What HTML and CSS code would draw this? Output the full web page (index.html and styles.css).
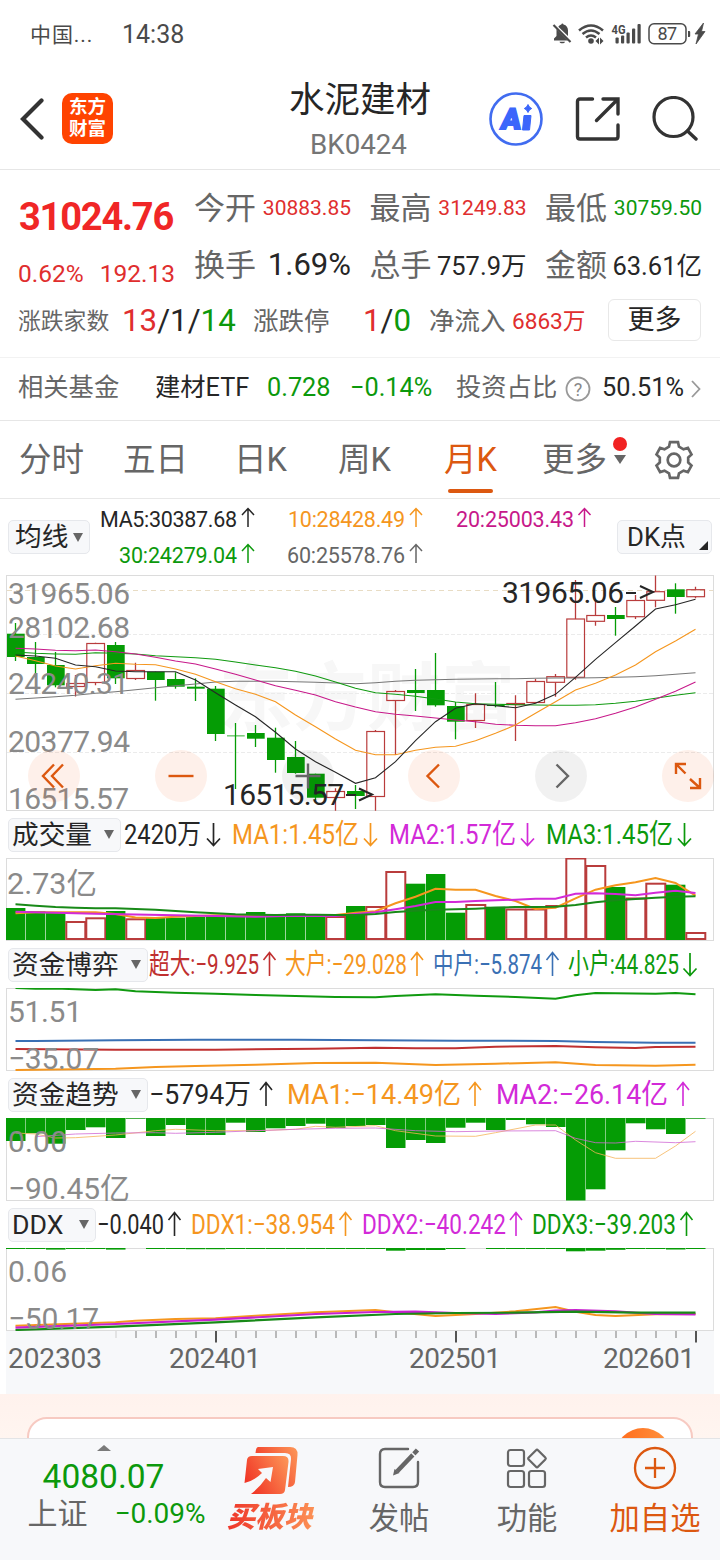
FILE: index.html
```html
<!DOCTYPE html>
<html lang="zh-CN">
<head>
    <meta charset="UTF-8">
    <meta name="viewport" content="width=device-width, initial-scale=1.0">
    <title>水泥建材 BK0424</title>
    <link rel="stylesheet" href="styles.css">
</head>
<body>

    <!-- Shared shapes -->
    <svg class="defs" width="0" height="0">
        <defs>
            <path id="up" d="M0 9V-9M-6 -3L0 -9.5L6 -3" fill="none" stroke="currentColor" stroke-width="1.5"/>
            <path id="down" d="M0 -11V11M-6.5 4.5L0 11.5L6.5 4.5" fill="none" stroke="currentColor" stroke-width="1.7"/>
            <path id="up-lg" d="M0 12V-11M-6 -4L0 -11.5L6 -4" fill="none" stroke="currentColor" stroke-width="1.6"/>
            <linearGradient id="hot" x1="0" y1="0.7" x2="1" y2="0.2">
                <stop offset="0" stop-color="#f03224"/>
                <stop offset="1" stop-color="#fc9155"/>
            </linearGradient>
        </defs>
    </svg>

    <!-- Status Bar -->
    <div class="status-bar">
        <span class="carrier">中国...</span>
        <span class="clock">14:38</span>
        <svg class="status-icons" width="158" height="28" viewBox="0 0 158 28">
            <g fill="#4a4a4a">
                <path d="M4 20.500V18.500l2.500-2.500V9L18 20.500zM8.300 6.800C9.200 5.600 10.200 4.800 11.300 4.500c.2-1.200 2-1.200 2.200 0 3 .7 4.500 3 4.500 6v5.500z"/>
                <path d="M9.500 21.700h5.500c-.5 2.200-5 2.200-5.500 0z"/>
                <path d="M3.500 5l17 17" stroke="#4a4a4a" stroke-width="2.200"/>
                <circle cx="41" cy="21" r="2.800"/>
                <path d="M49 17.500v7l-3.500-3.500zM50 17.500v7l3.500-3.500z"/>
                <rect x="65.500" y="17.500" width="3.200" height="6" rx="1"/>
                <rect x="71" y="15.500" width="3.200" height="8" rx="1"/>
                <rect x="76.500" y="12.500" width="3.200" height="11" rx="1"/>
                <rect x="82" y="8.500" width="3.200" height="15" rx="1"/>
                <rect x="87.500" y="4" width="3.200" height="19.500" rx="1"/>
                <path d="M138 11h1.200q1 0 1 1v4q0 1-1 1H138z"/>
                <path d="M153.500 3l-8.500 11h3.500l-2.500 10 9-12.500h-3.500z" stroke="#4a4a4a" stroke-width=".8"/>
            </g>
            <g fill="none" stroke="#4a4a4a" stroke-width="2.500">
                <path d="M29 10.500q12-10 24 0M32.500 14q8.500-7 17 0M36 17.500q5-4 10 0"/>
                <rect x="99" y="3.700" width="37" height="20" rx="5" stroke-width="1.500"/>
            </g>
            <text class="net" x="61.500" y="14" textLength="14" lengthAdjust="spacingAndGlyphs">4G</text>
            <text class="battery" x="107.500" y="20.300" textLength="19.500">87</text>
        </svg>
    </div>

    <!-- Title Bar -->
    <div class="title-bar">
        <div class="title-left">
            <svg width="26" height="44" viewBox="0 0 26 44"><path d="M23.500 3.500L5 22l18.500 18.500" fill="none" stroke="#333" stroke-width="4.200" stroke-linecap="round"/></svg>
            <div class="logo"><span>东方</span><span>财富</span></div>
        </div>
        <div class="title-center">
            <h1>水泥建材</h1>
            <p>BK0424</p>
        </div>
        <div class="title-right">
            <svg width="54" height="54" viewBox="0 0 54 54">
                <circle cx="27" cy="27" r="25.500" fill="none" stroke="#416cf0" stroke-width="2.600"/>
                <text class="ai" transform="translate(11 36.500) skewX(-7)" textLength="20" lengthAdjust="spacingAndGlyphs">A</text>
                <path d="M35 23.500h7l-1.500 14.500h-7z" fill="#3b66fb" stroke="#3b66fb" stroke-linejoin="round"/>
                <path d="M39 12.500q1 3 3.700 4-2.700 1-3.700 4-1-3-3.700-4 2.700-1 3.700-4z" fill="#3b66fb" stroke="#3b66fb"/>
            </svg>
            <svg width="46" height="46" viewBox="0 0 46 46">
                <path d="M17.500 3H5Q2.500 3 2.500 5.500v35Q2.500 43 5 43h35.500Q43 43 43 40.500V29M28 3h15v15M42 4L21.500 24.500" fill="none" stroke="#333" stroke-width="3.400" stroke-linecap="round"/>
            </svg>
            <svg width="46" height="46" viewBox="0 0 46 46">
                <circle cx="21.500" cy="21" r="19.500" fill="none" stroke="#333" stroke-width="3.200"/>
                <path d="M35.500 35l8.500 8" stroke="#333" stroke-width="3.400" stroke-linecap="round"/>
            </svg>
        </div>
    </div>

    <!-- Quote -->
    <div class="quote">
        <div class="price">
            <div class="last red">31024.76</div>
            <div class="change red"><span>0.62%</span><span>192.13</span></div>
        </div>
        <div class="stats">
            <div class="stat"><label>今开</label><b class="small red">30883.85</b></div>
            <div class="stat"><label>最高</label><b class="small red">31249.83</b></div>
            <div class="stat"><label>最低</label><b class="small green">30759.50</b></div>
            <div class="stat"><label>换手</label><b class="large">1.69%</b></div>
            <div class="stat"><label>总手</label><b>757.9万</b></div>
            <div class="stat"><label>金额</label><b>63.61亿</b></div>
        </div>
        <div class="breadth">
            <span class="label-sm">涨跌家数</span>
            <span class="count"><i class="red">13</i>/1/<i class="green">14</i></span>
            <span class="label-md">涨跌停</span>
            <span class="count"><i class="red">1</i>/<i class="green">0</i></span>
            <span class="label-md">净流入</span>
            <span class="flow red">6863万</span>
            <button class="more-button">更多</button>
        </div>
    </div>

    <!-- Related Fund -->
    <div class="fund">
        <span class="gray">相关基金</span>
        <span>建材ETF</span>
        <span class="green">0.728</span>
        <span class="green">−0.14%</span>
        <span class="gray">投资占比</span>
        <svg width="26" height="26" viewBox="0 0 26 26">
            <circle cx="13" cy="13" r="11.500" fill="none" stroke="#999" stroke-width="1.800"/>
            <text class="help" x="13" y="19.500">?</text>
        </svg>
        <span>50.51%</span>
        <svg width="12" height="20" viewBox="0 0 12 20"><path d="M2 2l7.500 8L2 18" fill="none" stroke="#999" stroke-width="1.800"/></svg>
    </div>

    <!-- Period Tabs -->
    <div class="tabs">
        <span>分时</span>
        <span>五日</span>
        <span>日K</span>
        <span>周K</span>
        <span class="active">月K</span>
        <span class="more-tab">更多</span>
        <svg width="40" height="40" viewBox="-20 -20 40 40" fill="none" stroke="#666" stroke-width="2.700">
            <path d="M-4 -17.800h8l1 4.500 4.500 2.600 4.400-1.400 3.600 6.500-3.300 3.200v4.800l3.300 3.200-3.600 6.500-4.400-1.400-4.500 2.600-1 4.500h-8l-1-4.500-4.500-2.600-4.400 1.400-3.600-6.500 3.300-3.200v-4.800l-3.300-3.200 3.600-6.500 4.400 1.400 4.500-2.600z"/>
            <circle r="6.300"/>
        </svg>
    </div>

    <!-- Moving Averages -->
    <div class="ma-row">
        <button class="picker">均线<i class="caret"></i></button>
        <svg class="ma-values" width="527" height="76" viewBox="90 0 527 76">
            <g class="c-black"><text x="100" y="27.500" textLength="137">MA5:30387.68</text><use href="#up" x="248" y="19"/></g>
            <g class="c-orange"><text x="288" y="27.500" textLength="117">10:28428.49</text><use href="#up" x="416" y="19"/></g>
            <g class="c-pink"><text x="456" y="27.500" textLength="118">20:25003.43</text><use href="#up" x="584.500" y="19"/></g>
            <g class="c-green"><text x="119" y="63.500" textLength="118">30:24279.04</text><use href="#up" x="248" y="55"/></g>
            <g class="c-gray"><text x="287" y="63.500" textLength="118">60:25578.76</text><use href="#up" x="416" y="55"/></g>
        </svg>
        <button class="picker dk">DK点<i class="corner"></i></button>
    </div>

    <!-- Candlestick Chart -->
    <div class="chart-wrap">
        <svg id="kline" width="720" height="236" viewBox="0 0 720 236">
            <text class="watermark" x="219" y="149" textLength="296">东方财富</text>
            <g class="grid-lines">
                <path d="M7 59.500H713M7 118.500H713M7 177.500H713"/>
                <path class="last-line" d="M7 15.500H713"/>
            </g>
            <rect class="frame" x="6.500" y="0.500" width="707" height="235"/>
            <g class="plot"></g>
            <g class="axis-text">
                <text x="8" y="28.500" textLength="122">31965.06</text>
                <text x="8" y="63" textLength="122">28102.68</text>
                <text x="8" y="118.500" textLength="121">24240.31</text>
                <text x="8" y="177" textLength="122">20377.94</text>
                <text x="8" y="234" textLength="121">16515.57</text>
            </g>
            <g class="extreme">
                <text x="502" y="27.500" textLength="122">31965.06</text>
                <text x="223" y="229.500" textLength="121">16515.57</text>
                <path d="M626 18h10M640 11l13 6-13 6"/>
                <path d="M346 220h10M359 213.500l13 6-13 6"/>
            </g>
        </svg>
        <div class="chart-tools">
            <button><svg viewBox="-26 -26 52 52"><path d="M0 -11.500L-11 0 0 11.500M9 -11.500L-2 0 9 11.500"/></svg></button>
            <button><svg viewBox="-26 -26 52 52"><path d="M-12.500 0H12.500"/></svg></button>
            <button class="off"><svg viewBox="-26 -26 52 52"><path d="M-12.500 0H12.500M0 -12.500V12.500"/></svg></button>
            <button><svg viewBox="-26 -26 52 52"><path d="M5 -11.500L-6.500 0 5 11.500"/></svg></button>
            <button class="off"><svg viewBox="-26 -26 52 52"><path d="M-4.500 -11.500L7 0 -4.500 11.500"/></svg></button>
            <button><svg viewBox="-26 -26 52 52"><path d="M-12 -2V-12H-2M-12 -12L-2.500 -2.500M2 3L12 12M12 2V12H2"/></svg></button>
        </div>
    </div>

    <!-- Volume -->
    <div class="legend">
        <button class="picker three">成交量<i class="caret"></i></button>
        <svg width="599" height="47" viewBox="121 0 599 47">
            <g class="c-black"><text x="124" y="33" textLength="77" lengthAdjust="spacingAndGlyphs">2420万</text><use href="#down" x="213.500" y="23"/></g>
            <g class="c-orange"><text x="232" y="33" textLength="127" lengthAdjust="spacingAndGlyphs">MA1:1.45亿</text><use href="#down" x="370.500" y="23"/></g>
            <g class="c-purple"><text x="389" y="33" textLength="127" lengthAdjust="spacingAndGlyphs">MA2:1.57亿</text><use href="#down" x="527.500" y="23"/></g>
            <g class="c-green"><text x="546" y="33" textLength="127" lengthAdjust="spacingAndGlyphs">MA3:1.45亿</text><use href="#down" x="684.500" y="23"/></g>
        </svg>
    </div>
    <svg id="volume" width="720" height="83" viewBox="0 0 720 83">
        <rect class="frame" x="6.500" y="0.500" width="707" height="82"/>
        <g class="plot"></g>
        <g class="axis-text">
            <text x="7" y="36" textLength="90" lengthAdjust="spacingAndGlyphs">2.73亿</text>
        </g>
    </svg>

    <!-- Capital Game -->
    <div class="legend">
        <button class="picker">资金博弈<i class="caret"></i></button>
        <svg width="572" height="47" viewBox="148 0 572 47">
            <g class="c-red"><text x="149" y="33" textLength="110" lengthAdjust="spacingAndGlyphs">超大:−9.925</text><use href="#up-lg" x="269.500" y="23"/></g>
            <g class="c-orange"><text x="285" y="33" textLength="122" lengthAdjust="spacingAndGlyphs">大户:−29.028</text><use href="#up-lg" x="417" y="23"/></g>
            <g class="c-blue"><text x="433" y="33" textLength="109" lengthAdjust="spacingAndGlyphs">中户:−5.874</text><use href="#up-lg" x="552.500" y="23"/></g>
            <g class="c-green"><text x="568" y="33" textLength="111" lengthAdjust="spacingAndGlyphs">小户:44.825</text><use href="#down" x="690" y="23"/></g>
        </svg>
    </div>
    <svg id="game" width="720" height="83" viewBox="0 0 720 83">
        <rect class="frame" x="6.500" y="0.500" width="707" height="82"/>
        <g class="plot"></g>
        <g class="axis-text">
            <text x="8" y="34" textLength="74">51.51</text>
            <text x="8" y="81" textLength="91">−35.07</text>
        </g>
    </svg>

    <!-- Capital Trend -->
    <div class="legend">
        <button class="picker">资金趋势<i class="caret"></i></button>
        <svg width="572" height="47" viewBox="148 0 572 47">
            <g class="c-black"><text x="149" y="33" textLength="102" lengthAdjust="spacingAndGlyphs">−5794万</text><use href="#up-lg" x="266" y="23"/></g>
            <g class="c-orange"><text x="287" y="33" textLength="174" lengthAdjust="spacingAndGlyphs">MA1:−14.49亿</text><use href="#up-lg" x="475" y="23"/></g>
            <g class="c-purple"><text x="496" y="33" textLength="172" lengthAdjust="spacingAndGlyphs">MA2:−26.14亿</text><use href="#up-lg" x="683" y="23"/></g>
        </svg>
    </div>
    <svg id="trend" width="720" height="83" viewBox="0 0 720 83">
        <rect class="frame" x="6.500" y="0.500" width="707" height="82"/>
        <g class="plot"></g>
        <g class="axis-text">
            <text x="8" y="34" textLength="59">0.00</text>
            <text x="8" y="80.500" textLength="122" lengthAdjust="spacingAndGlyphs">−90.45亿</text>
        </g>
    </svg>

    <!-- DDX -->
    <div class="legend">
        <button class="picker ddx-picker">DDX<i class="caret"></i></button>
        <svg width="624" height="47" viewBox="96 0 624 47">
            <g class="c-black"><text x="97" y="33" textLength="67" lengthAdjust="spacingAndGlyphs">−0.040</text><use href="#up-lg" x="174.500" y="23"/></g>
            <g class="c-orange"><text x="191" y="33" textLength="144" lengthAdjust="spacingAndGlyphs">DDX1:−38.954</text><use href="#up-lg" x="345.500" y="23"/></g>
            <g class="c-purple"><text x="362" y="33" textLength="144" lengthAdjust="spacingAndGlyphs">DDX2:−40.242</text><use href="#up-lg" x="516" y="23"/></g>
            <g class="c-green"><text x="532" y="33" textLength="144" lengthAdjust="spacingAndGlyphs">DDX3:−39.203</text><use href="#up-lg" x="686.500" y="23"/></g>
        </svg>
    </div>
    <svg id="ddx" width="720" height="83" viewBox="0 0 720 83">
        <rect class="frame" x="6.500" y="0.500" width="707" height="82"/>
        <g class="plot"></g>
        <g class="axis-text">
            <text x="8" y="34" textLength="59">0.06</text>
            <text x="8" y="81" textLength="91">−50.17</text>
        </g>
    </svg>

    <!-- Time Axis -->
    <div class="time-axis">
        <svg id="ticks" width="708" height="63" viewBox="6 0 708 63">
            <g class="plot"></g>
            <text x="8" y="36.500" textLength="94">202303</text>
            <text x="169" y="36.500" textLength="92">202401</text>
            <text x="409" y="36.500" textLength="92">202501</text>
            <text x="603" y="36.500" textLength="92">202601</text>
        </svg>
    </div>

    <!-- Card Peeking Above the Bar -->
    <div class="peek">
        <div class="peek-card"><div class="peek-ball"></div></div>
    </div>

    <!-- Bottom Bar -->
    <div class="bottom-bar">
        <div class="index">
            <i class="up-caret"></i>
            <div class="index-value">4080.07</div>
            <div class="index-line"><span>上证</span><span class="green">−0.09%</span></div>
        </div>
        <div class="action hot">
            <svg width="54" height="50" viewBox="0 0 54 50">
                <path d="M14 1h32q8 0 7.500 8L51 36q-.5 5-7 5l3-28q.5-6-6-6H11.500Q12 1 14 1z" fill="url(#hot)"/>
                <path d="M8 10h31q6 0 5.500 6L41 44q-.5 4-5 4H7q9-7 15-16l4.500 4L29 21l-15 2 4 4Q10 35 0.500 37L3 14q.5-4 5-4z" fill="url(#hot)"/>
            </svg>
            <span>买板块</span>
        </div>
        <div class="action">
            <svg width="44" height="44" viewBox="0 0 44 44" fill="none" stroke="#666" stroke-width="2.400">
                <path d="M31 3H8Q3 3 3 8v28q0 5 5 5h28q5 0 5-5V16" stroke-linecap="round"/>
                <path d="M40.500 4L20 25.500" stroke-width="4.600"/><path d="M16 29.500l1.500-6.500 5 4z" fill="#666" stroke="none"/><path d="M34 6l5 5" stroke="#f7f8fa" stroke-width="1.500"/>
            </svg>
            <span>发帖</span>
        </div>
        <div class="action">
            <svg width="44" height="44" viewBox="0 0 44 44" fill="none" stroke="#666" stroke-width="2.200">
                <rect x="3" y="4" width="16" height="16" rx="2.500"/>
                <rect x="3" y="25" width="16" height="16" rx="2.500"/>
                <rect x="24" y="25" width="16" height="16" rx="2.500"/>
                <path d="M31 4.200Q32 3 33 4.200L40.300 11.500Q41.300 12.500 40.300 13.500L33 20.800Q32 22 31 20.800L23.700 13.500Q22.700 12.500 23.700 11.500z"/>
            </svg>
            <span>功能</span>
        </div>
        <div class="action add">
            <svg width="44" height="44" viewBox="0 0 44 44" fill="none" stroke="#dc5810" stroke-width="2.300">
                <circle cx="22" cy="22" r="20"/>
                <path d="M12 22h20M22 12v20"/>
            </svg>
            <span>加自选</span>
        </div>
    </div>

    <script src="charts.js"></script>
</body>
</html>
```
FILE: styles.css
```css
* {
    margin: 0;
    padding: 0;
    box-sizing: border-box;
}

body {
    width: 720px;
    height: 1560px;
    overflow: hidden;
    font-family: Roboto, "Noto Sans CJK SC", sans-serif;
    background-color: #fff;
    color: #262626;
    white-space: nowrap;
}

svg {
    display: block;
    flex-shrink: 0;
}

button {
    font-family: inherit;
    color: inherit;
    border: none;
    background: none;
}

i, b, h1 {
    font-style: normal;
    font-weight: normal;
}

.defs {
    position: absolute;
}

.red { color: #e02e2e; }
.green { color: #0c990c; }
.gray { color: #666; }

/* Status Bar */
.status-bar {
    height: 68px;
    display: flex;
    align-items: center;
    padding: 0 12px 0 30px;
    color: #4a4a4a;
}

.carrier {
    width: 92px;
    font-size: 21px;
    letter-spacing: 0.900px;
    padding-bottom: 2px;
}

.clock {
    font-size: 25px;
}

.status-icons {
    margin-left: auto;
}

.net {
    font-size: 13px;
    font-weight: bold;
    fill: #4a4a4a;
}

.battery {
    font-size: 18px;
    fill: #4a4a4a;
}

/* Title Bar */
.title-bar {
    height: 102px;
    display: grid;
    grid-template-columns: 220px 280px 220px;
    border-bottom: 1px solid #e6e6e6;
}

.title-left {
    display: flex;
    align-items: center;
    gap: 18px;
    padding-left: 18px;
}

.logo {
    width: 51px;
    height: 51px;
    border-radius: 10px;
    background-color: #ff4300;
    color: #fff;
    display: flex;
    flex-direction: column;
    align-items: center;
    justify-content: center;
    font-size: 18.500px;
    font-weight: bold;
    line-height: 22px;
    padding-bottom: 1px;
}

.title-center {
    text-align: center;
    padding-top: 9px;
}

.title-center h1 {
    font-size: 35.500px;
    line-height: 46px;
}

.title-center p {
    font-size: 27.700px;
    line-height: 43px;
    margin-left: -3px;
    color: #757575;
}

.title-right {
    display: flex;
    align-items: center;
    justify-content: flex-end;
    gap: 31px;
    padding-right: 22px;
    margin-left: -60px;
}

.title-right svg:first-child {
    margin-right: 1px;
}

.ai {
    font-size: 29px;
    font-weight: 900;
    fill: #3b66fb;
    stroke: #3b66fb;
    stroke-width: 1.800px;
}

/* Quote */
.quote {
    height: 188px;
    display: grid;
    grid-template-columns: 175px 508px;
    grid-template-rows: 119px 60px;
    padding: 9px 18px 0 19px;
    border-bottom: 1px solid #f2f2f2;
}

.last {
    height: 76px;
    line-height: 76px;
    font-size: 38px;
    font-weight: bold;
    letter-spacing: -1.200px;
    color: #f02626;
}

.change {
    display: flex;
    gap: 16px;
    margin-left: -1px;
    font-size: 24.500px;
    line-height: 38px;
}

.stats {
    display: grid;
    grid-template-columns: repeat(3, 157px);
    grid-auto-rows: 57px;
    column-gap: 18.500px;
}

.stat {
    display: flex;
    align-items: center;
    justify-content: space-between;
    font-size: 25.500px;
}

.stat label {
    font-size: 31px;
    padding-bottom: 5px;
    color: #666;
}

.stat b {
    padding-bottom: 2px;
}

.stat .small {
    font-size: 21px;
    padding-bottom: 0;
}

.stat .large {
    font-size: 31px;
    padding-bottom: 0;
}

.breadth {
    grid-column: 1 / 3;
    height: 44px;
    display: grid;
    grid-template-columns: 104px 131px 110px 66px 83px 96px 93px;
    align-items: center;
    margin-left: -1px;
}

.label-sm {
    font-size: 22.800px;
    color: #666;
    padding-bottom: 2px;
}

.label-md {
    font-size: 25.500px;
    color: #666;
    padding-bottom: 3px;
}

.count {
    font-size: 31.300px;
}

.flow {
    font-size: 22.600px;
    padding-bottom: 2px;
}

.more-button {
    height: 42px;
    border: 1px solid #e8e8e8;
    border-radius: 6px;
    font-size: 27px;
    line-height: 36px;
}

/* Related Fund */
.fund {
    height: 63px;
    display: grid;
    grid-template-columns: 137px 112px 83px 106px 109px 37px 88px 12px;
    align-items: center;
    padding: 0 0 1px 18px;
    font-size: 25.300px;
    border-bottom: 1px solid #e6e6e6;
}

.fund span {
    line-height: 30px;
    padding-bottom: 2px;
}

.help {
    font-size: 18px;
    fill: #888;
    text-anchor: middle;
}

/* Period Tabs */
.tabs {
    height: 78px;
    display: grid;
    grid-template-columns: 104px 111px 104px 106px 98px 111px 50px;
    align-items: center;
    padding-left: 19px;
    font-size: 32.500px;
    color: #666;
    border-bottom: 1px solid #e8e8e8;
}

.tabs span {
    position: relative;
    justify-self: start;
    line-height: 78px;
}

.tabs svg {
    margin-left: 1px;
}

.tabs .active {
    color: #dc5810;
}

.tabs .active::after {
    content: "";
    position: absolute;
    left: 4px;
    bottom: 6px;
    width: 45px;
    height: 4px;
    border-radius: 2px;
    background-color: #dc5810;
}

.more-tab::before {
    content: "";
    position: absolute;
    right: -20px;
    top: 16px;
    width: 14px;
    height: 14px;
    border-radius: 50%;
    background-color: #f12222;
}

.more-tab::after {
    content: "";
    position: absolute;
    right: -19px;
    top: 34px;
    border: 6px solid transparent;
    border-top: 9px solid #666;
    border-bottom: none;
}

/* Moving Averages */
.ma-row {
    height: 76px;
    display: flex;
    align-items: center;
    padding-left: 8px;
}

.picker {
    width: 140px;
    height: 34px;
    display: flex;
    align-items: center;
    justify-content: space-between;
    flex-shrink: 0;
    padding: 0 6px 0 3px;
    font-size: 26.700px;
    line-height: 30px;
    background-color: #f7f8fa;
    border: 1px solid #e6e8ec;
    border-radius: 5px;
}

.picker.three {
    width: 113px;
}

.picker.ddx-picker {
    width: 88px;
}

.ma-row .picker {
    width: 82px;
    padding-left: 6px;
}

.ma-row .dk {
    width: 95px;
    padding: 0 3px 0 9px;
    font-size: 25.800px;
}

.caret {
    border: 5.500px solid transparent;
    border-top: 9px solid #666;
    border-bottom: none;
}

.corner {
    align-self: flex-end;
    margin-bottom: 3px;
    border-left: 9px solid transparent;
    border-bottom: 9px solid #262626;
}

.ma-values text {
    font-size: 21.500px;
    fill: currentColor;
}

.c-black { color: #262626; }
.c-orange { color: #f5961e; }
.c-pink { color: #c7198a; }
.c-green { color: #0c990c; }
.c-gray { color: #666; }
.c-purple { color: #d22ad8; }
.c-red { color: #c03030; }
.c-blue { color: #3a70b4; }

/* Charts */
.chart-wrap {
    position: relative;
}

.frame {
    fill: none;
    stroke: #dcdcdc;
}

.grid-lines path {
    stroke: #ebebeb;
    stroke-dasharray: 4 2;
}

.grid-lines .last-line {
    stroke: #e8dcc4;
    stroke-dasharray: 5 4;
}

.watermark {
    font-size: 74px;
    font-weight: bold;
    fill: #f7f7f7;
}

.axis-text text {
    font-size: 30px;
    fill: #8a8a8a;
}

.extreme text {
    font-size: 30px;
    fill: #262626;
}

.extreme path {
    fill: none;
    stroke: #262626;
    stroke-width: 2;
}

.chart-tools {
    position: absolute;
    left: 28px;
    right: 6px;
    top: 175px;
    display: flex;
    justify-content: space-between;
}

.chart-tools button {
    width: 52px;
    height: 52px;
    border-radius: 50%;
    background-color: rgba(240, 90, 20, 0.09);
}

.chart-tools .off {
    background-color: rgba(0, 0, 0, 0.055);
}

.chart-tools path {
    fill: none;
    stroke: #dc5810;
    stroke-width: 2.400;
}

.chart-tools .off path {
    stroke: #666;
}

/* Indicator Legends */
.legend {
    height: 47px;
    display: flex;
    align-items: center;
    padding-left: 8px;
}

.legend text {
    font-size: 28px;
    fill: currentColor;
}

/* Time Axis */
.time-axis {
    height: 63px;
    margin: 0 6px;
    background-color: #f7f8fa;
}

.time-axis text {
    font-size: 28px;
    fill: #666;
}

/* Card */
.peek {
    height: 44px;
    padding: 23px 27px 0;
    overflow: hidden;
    background: linear-gradient(#fff2ed, #fff5f0);
}

.peek-card {
    position: relative;
    height: 60px;
    background-color: #fff;
    border: 2px solid #f7cac2;
    border-radius: 20px;
}

.peek-ball {
    position: absolute;
    right: 20px;
    top: 9px;
    width: 56px;
    height: 56px;
    border-radius: 50%;
    background: linear-gradient(90deg, #ff6a1a, #ff9440);
}

/* Bottom Bar */
.bottom-bar {
    height: 122px;
    display: grid;
    grid-template-columns: 207px repeat(4, 128px);
    background-color: #f7f8fa;
    border-top: 1px solid #e3e4e6;
}

.index {
    display: flex;
    flex-direction: column;
    align-items: center;
    padding-top: 6px;
}

.up-caret {
    border: 7.500px solid transparent;
    border-top: none;
    border-bottom: 6px solid #7a7a7a;
}

.index-value {
    font-size: 33.500px;
    line-height: 50px;
    padding-top: 1px;
    color: #0c990c;
}

.index-line {
    display: flex;
    align-items: center;
    gap: 27px;
    padding-left: 26px;
    font-size: 30px;
    line-height: 24px;
    color: #666;
}

.index-line .green {
    font-size: 28px;
    color: #0c990c;
}

.action {
    display: flex;
    flex-direction: column;
    align-items: center;
    padding-top: 7px;
    font-size: 30.300px;
    color: #666;
}

.action span {
    line-height: 44px;
    margin-top: 7px;
}

.hot span {
    font-size: 28.500px;
    font-weight: 900;
    font-style: italic;
    line-height: 40px;
    margin: 2px 0 0 -3px;
    padding: 0 3px;
    color: transparent;
    background: linear-gradient(90deg, #ee3328, #fc9155);
    background-clip: text;
    -webkit-background-clip: text;
}

.action.add {
    color: #dc5810;
}
```
FILE: charts.js
```js
const NS = 'http://www.w3.org/2000/svg';
const STEP = 20;
const GREEN = '#059c05';
const RED = '#b93c3c';

// Centre of the column for month i
function cx(i) {
    return 15.5 + i * STEP;
}

function add(parent, name, attrs) {
    const el = document.createElementNS(NS, name);
    for (const key in attrs) {
        el.setAttribute(key, attrs[key]);
    }
    parent.appendChild(el);
}

function plot(id) {
    return document.querySelector('#' + id + ' .plot');
}

// One value per month
function line(parent, values, color, width) {
    const points = values.map((y, i) => cx(i) + ',' + y).join(' ');
    add(parent, 'polyline', { points: points, fill: 'none', stroke: color, 'stroke-width': width });
}

// [month, y] pairs, straight between them
function sparseLine(parent, pairs, color, width) {
    const points = pairs.map(p => cx(p[0]) + ',' + p[1]).join(' ');
    add(parent, 'polyline', { points: points, fill: 'none', stroke: color, 'stroke-width': width });
}

// Candles: [direction, body top, body bottom, high, low]
const candles = [
    ['d', 58.7, 82, 48, 86], ['d', 82, 89, 67, 101.7], ['d', 90, 110.3, 77, 112.3],
    ['u', 108.5, 111.5, 100, 121.5], ['u', 68.5, 107.5, 67.7, 110.3], ['d', 70, 103.3, 67, 109],
    ['u', 95.5, 103.5, 87.7, 105], ['d', 96.7, 105, 96.7, 125.7], ['d', 104, 111.7, 97.3, 113.7],
    ['d', 111.7, 113.7, 103.3, 126], ['d', 113.7, 159, 111, 166], ['d', 160.5, 161.3, 148, 214],
    ['d', 158, 163.7, 150, 172], ['d', 162.7, 185, 152.7, 197.7], ['d', 182, 198, 166, 198.7],
    ['d', 198.7, 222.7, 198.7, 225], ['u', 216.5, 222.5, 213.3, 235.7], ['d', 216, 221, 210, 234],
    ['u', 156.5, 221.5, 155, 235.7], ['u', 116.5, 125.5, 115, 180], ['d', 115, 118, 94, 136],
    ['d', 115, 130.3, 78, 131.7], ['d', 131, 146.7, 127, 164.3], ['u', 129.5, 145.5, 118.3, 153],
    ['d', 130, 131, 107, 132.3], ['u', 128.5, 129.5, 120.3, 166], ['u', 106.5, 127.5, 104, 128.3],
    ['u', 101.7, 107.3, 99, 121.7], ['u', 44, 102.3, 5, 104.7], ['u', 40.5, 46.3, 25, 50.7],
    ['d', 40, 44, 32, 60.7], ['u', 25.5, 41.7, 20, 44], ['u', 16.7, 25.3, 0.5, 32.3],
    ['d', 14.3, 22, 8.3, 38.7], ['u', 14.7, 21.7, 11.7, 23.3]
];

const kline = plot('kline');
candles.forEach(([dir, top, bottom, high, low], i) => {
    const x = cx(i);
    if (dir === 'd') {
        add(kline, 'path', { d: `M${x} ${high}V${low}`, stroke: GREEN, 'stroke-width': 1.3 });
        add(kline, 'rect', { x: x - 8.5, y: top, width: 17.7, height: bottom - top, fill: GREEN });
    } else {
        add(kline, 'path', { d: `M${x} ${high}V${top}M${x} ${bottom}V${low}`, stroke: RED, 'stroke-width': 1.3 });
        add(kline, 'rect', { x: x - 8.7, y: top, width: 17.7, height: bottom - top, fill: 'none', stroke: RED, 'stroke-width': 1.2 });
    }
});

line(kline, [124.3, 123, 121.7, 120.3, 118.3, 116.7, 114.7, 112.7, 110.7, 109, 107, 106.3, 106.3, 106.3, 106.7, 107.3, 108, 108.7, 107.7, 106.3, 105.3, 104.7, 104.3, 104, 103.7, 103.7, 103.3, 103, 103, 102.7, 102.3, 101.7, 100.7, 99.3, 97.7], '#777', 1.1);
line(kline, [77, 78.3, 79, 79.3, 77.7, 78.3, 79, 80.7, 81.7, 82.7, 84.3, 87, 90, 92.7, 96.3, 101, 107, 113.3, 117.7, 119.3, 121.3, 124, 127, 128.7, 129.3, 129.7, 130, 130.3, 130.3, 129.7, 128.3, 126.3, 123.3, 120.3, 117.7], '#109a10', 1.1);
line(kline, [73.3, 74, 75.3, 75.7, 75, 76.7, 79, 82.3, 86, 89, 94, 99.3, 105, 110.7, 115.3, 120, 126.7, 132, 136.7, 139.3, 141, 143, 145, 146.7, 149.3, 150.3, 150.7, 150.7, 147.7, 143.7, 138.3, 132, 124.3, 116.3, 107], '#c7198a', 1.1);
line(kline, [81, 85.7, 91, 94, 90.7, 88.3, 89.3, 89.7, 94, 99.3, 106.7, 113.7, 119.3, 126.7, 140, 151.7, 164, 175.3, 179.7, 179.7, 175.3, 172.3, 171.3, 165.7, 158.3, 150, 138.3, 126.7, 115, 108.3, 100, 90, 76.7, 66, 54.3], '#f5961e', 1.1);
line(kline, [80, 81, 83.3, 90, 91.7, 96, 96.7, 96.7, 96.7, 105, 117.7, 130, 141.7, 157.3, 174, 186.7, 197.3, 208.3, 202.7, 186.7, 165.7, 146.7, 133.3, 128.7, 130.7, 132.7, 128.3, 119.3, 102.3, 84.3, 67.7, 51, 34, 29.7, 24.3], '#262626', 1.1);

// Volume: [direction, bar top]
const volumes = [
    ['d', 50], ['d', 53], ['d', 55], ['u', 64], ['u', 60.3], ['d', 53], ['u', 61.3], ['d', 59.7], ['d', 59.7],
    ['d', 59], ['d', 58], ['d', 58], ['d', 54], ['d', 56], ['d', 55.3], ['d', 58], ['u', 59], ['d', 48],
    ['u', 49], ['u', 14], ['d', 25.7], ['d', 16], ['d', 54.7], ['u', 47], ['d', 48.7], ['u', 51.5],
    ['u', 51.5], ['u', 48], ['u', 0.5], ['u', 8], ['d', 29], ['u', 40.5], ['u', 25.7], ['d', 26.7], ['u', 75]
];

const volume = plot('volume');
volumes.forEach(([dir, top], i) => {
    if (dir === 'd') {
        add(volume, 'rect', { x: 6 + i * STEP, y: top, width: 19.4, height: 82 - top, fill: GREEN });
    } else {
        add(volume, 'rect', { x: 6.3 + i * STEP, y: top, width: 19, height: 81 - top, fill: '#fff', stroke: RED, 'stroke-width': 2 });
    }
});
sparseLine(volume, [[0, 55.3], [1, 54.3], [4, 54.3], [5, 56], [6, 59.5], [7, 60], [8, 58.7], [10, 57.3], [16, 57], [17, 54.7], [18, 53.3], [19, 45.3], [20, 38.7], [21, 30.7], [22, 31.7], [23, 31.7], [24, 38], [25, 43], [26, 51], [27, 49.7], [28, 40.3], [29, 31.7], [30, 27.3], [31, 24.3], [32, 20], [33, 25], [34, 37.7]], '#f5961e', 2);
sparseLine(volume, [[0, 53.7], [2, 54.7], [4, 55.7], [8, 57.3], [12, 58.7], [14, 57.7], [16, 58], [17, 56], [18, 54.3], [19, 51.3], [20, 48], [21, 44], [22, 44], [23, 43], [24, 42.3], [25, 41.7], [26, 40.7], [27, 40.7], [28, 35.7], [29, 35.3], [30, 36], [31, 37.3], [32, 34.7], [33, 32.7], [34, 35]], '#d22ad8', 2);
line(volume, [46.3, 47.7, 49, 49.7, 50.3, 50.3, 51, 51.7, 53, 54.3, 55.3, 56.3, 56.7, 57, 56.7, 56.7, 57, 57, 56, 54, 52.7, 51.7, 51.3, 50.7, 49.7, 49, 49, 48.7, 47, 44.3, 42.3, 41, 39.7, 38.7, 38.3], '#188a18', 2);

// Capital game
const game = plot('game');
sparseLine(game, [[0, 0], [1, 0.7], [2, 0.5], [3, 1.3], [4, 2], [5, 1.3], [6, 3.3], [8, 4.7], [10, 5.7], [12, 7], [14, 8], [16, 9], [18, 9.3], [19, 8], [21, 6.3], [23, 7.7], [25, 9], [27, 10.7], [28, 7.3], [29, 5], [32, 5.7], [33, 5], [34, 6.3]], '#109a10', 2);
sparseLine(game, [[0, 53], [1, 53], [5, 52.3], [9, 51.7], [14, 51.7], [18, 52.3], [22, 52.7], [27, 53], [29, 54], [32, 54.7], [34, 54.7]], '#3a70b4', 2);
sparseLine(game, [[0, 61], [5, 61.7], [10, 61.7], [15, 60.7], [18, 59.7], [20, 60.3], [22, 60.3], [24, 58.7], [27, 58], [29, 59.3], [31, 60], [32, 59], [34, 58.7]], '#c03030', 2);
sparseLine(game, [[0, 82], [3, 81.3], [5, 80.7], [7, 79], [9, 78], [12, 76.7], [15, 75], [18, 74.7], [21, 77], [24, 75.7], [27, 74.3], [29, 77], [32, 77.7], [34, 76.7]], '#f5961e', 2);

// Bars hanging from the top edge
function hangingBars(parent, depths) {
    depths.forEach((depth, i) => {
        add(parent, 'rect', { x: 6 + i * STEP, y: 0, width: 19.5, height: depth, fill: GREEN });
    });
}

// Capital trend
const trend = plot('trend');
hangingBars(trend, [23, 15.3, 25.7, 12, 9.3, 20, 0.7, 18, 7, 17, 17, 4.7, 14, 10.3, 8, 5.7, 10, 8, 7, 30, 22, 25, 9.7, 4.7, 12, 2, 6.3, 9, 82.5, 71.3, 32.3, 5.3, 11.3, 16, 0.7]);
sparseLine(trend, [[0, 15], [1, 16], [2, 20], [3, 19.7], [5, 17], [7, 12.7], [8, 11.3], [10, 12.7], [12, 12.7], [14, 11.3], [15, 8.3], [16, 9.3], [18, 7.7], [19, 12.7], [21, 18], [23, 18.3], [24, 14.7], [26, 7], [27, 7], [28, 22], [29, 34.7], [30, 40.3], [32, 40.3], [33, 28], [34, 13.3]], '#f5b45a', 0.8);
sparseLine(trend, [[1, 18.7], [3, 16], [5, 15], [7, 14.7], [8, 15.3], [10, 14.3], [12, 12.7], [14, 11.3], [16, 10.3], [18, 10], [20, 12.7], [22, 13.7], [24, 13], [27, 12.7], [28, 20.3], [29, 24.7], [30, 25], [31, 23.3], [33, 24.7], [34, 23.7]], '#d06ad4', 0.8);

// DDX
const ddx = plot('ddx');
hangingBars(ddx, [1, 1, 1.6, 1, 1, 1.6, 0, 1, 1, 1.2, 1.2, 1, 1, 1, 1, 1, 1, 1, 1, 2.7, 2, 2, 1, 0, 1, 1, 1, 1, 3.3, 2.7, 1.8, 1, 1, 1.5, 1]);
sparseLine(ddx, [[0, 77.7], [5, 74.3], [6, 72.7], [8, 71], [10, 70.3], [12, 67.7], [15, 64.3], [18, 62], [19, 64.3], [21, 68], [23, 66], [25, 63.3], [27, 59], [28, 63.7], [29, 67], [30, 68], [32, 66.3], [34, 66]], '#f5961e', 2);
sparseLine(ddx, [[0, 79.7], [5, 76], [10, 71.7], [15, 66], [18, 64], [20, 63.7], [22, 65], [24, 66], [26, 64.3], [27, 62.7], [28, 62], [30, 63.3], [32, 66], [34, 66.3]], '#c820d0', 2.2);
sparseLine(ddx, [[0, 82], [5, 78.7], [10, 74.3], [15, 69.3], [19, 66], [22, 65], [25, 64.7], [28, 63.7], [31, 64.7], [34, 64.7]], '#188a18', 2.2);

// Month ticks, a long one each January
const ticks = plot('ticks');
for (let i = 5; i < 35; i++) {
    const major = i % 12 === 10;
    add(ticks, 'path', {
        d: `M${cx(i) + 0.5} 0V${major ? 11.5 : 7}`,
        stroke: major ? '#555' : (i === 5 ? '#ddd' : '#a5a5a5'),
        'stroke-width': major ? 2 : 1.5
    });
}
```
